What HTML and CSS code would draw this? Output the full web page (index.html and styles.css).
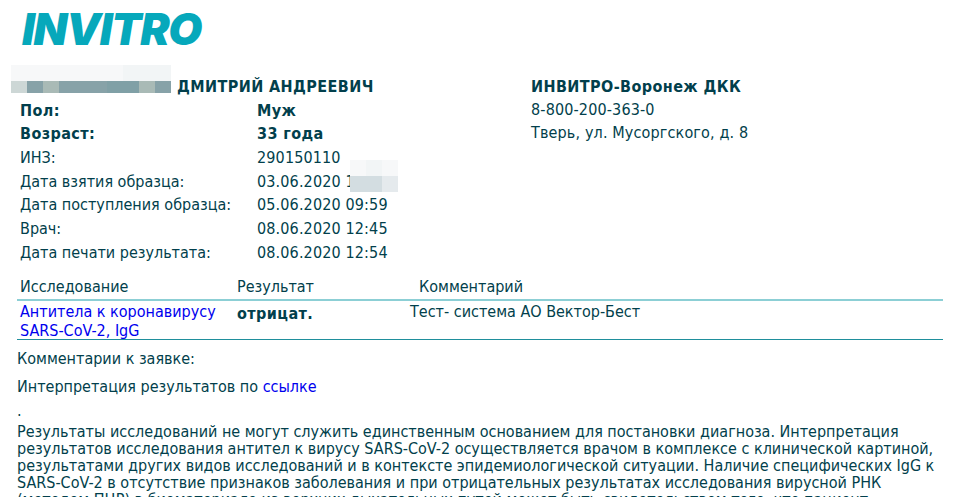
FILE: index.html
```html
<!DOCTYPE html>
<html lang="ru">
<head>
<meta charset="utf-8">
<title>INVITRO</title>
<link rel="stylesheet" href="styles.css">
</head>
<body>
<header class="logo-row"><span class="logo">INVITRO</span></header>
<section class="info">
  <div class="patient">
    <div class="name"><span class="name-text">ДМИТРИЙ АНДРЕЕВИЧ</span></div>
    <dl class="fields">
      <dt class="strong">Пол:</dt><dd class="strong">Муж</dd>
      <dt class="strong">Возраст:</dt><dd class="strong">33 года</dd>
      <dt>ИНЗ:</dt><dd>290150110</dd>
      <dt>Дата взятия образца:</dt><dd>03.06.2020 1</dd>
      <dt>Дата поступления образца:</dt><dd>05.06.2020 09:59</dd>
      <dt>Врач:</dt><dd>08.06.2020 12:45</dd>
      <dt>Дата печати результата:</dt><dd>08.06.2020 12:54</dd>
    </dl>
  </div>
  <div class="lab">
    <div class="lab-name">ИНВИТРО-Воронеж ДКК</div>
    <div class="lab-line">8-800-200-363-0</div>
    <div class="lab-line">Тверь, ул. Мусоргского, д. 8</div>
  </div>
</section>
<section class="results">
  <div class="results-head">
    <span class="col-test">Исследование</span>
    <span class="col-result">Результат</span>
    <span class="col-comment">Комментарий</span>
  </div>
  <div class="results-row">
    <a class="col-test link" href="#">Антитела к коронавирусу SARS-CoV-2, IgG</a>
    <span class="col-result strong">отрицат.</span>
    <span class="col-note">Тест- система АО Вектор-Бест</span>
  </div>
</section>
<section class="notes">
  <p class="note-title">Комментарии к заявке:</p>
  <p class="note-link">Интерпретация результатов по <a class="link" href="#">ссылке</a></p>
  <p class="note-dot">.</p>
  <p class="note-body">Результаты исследований не могут служить единственным основанием для постановки диагноза. Интерпретация<br>результатов исследования антител к вирусу SARS-CoV-2 осуществляется врачом в комплексе с клинической картиной,<br>результатами других видов исследований и в контексте эпидемиологической ситуации. Наличие специфических IgG к<br>SARS-CoV-2 в отсутствие признаков заболевания и при отрицательных результатах исследования вирусной РНК<br>(методом ПЦР) в биоматериале из верхних дыхательных путей может быть свидетельством того, что пациент</p>
</section>
<div class="mosaic mosaic-name">
  <i class="t a"></i><i class="t a"></i><i class="t a"></i><i class="t a"></i><i class="t a"></i><i class="t a"></i><i class="t a"></i><i class="t b"></i><i class="t b"></i><i class="t b"></i>
  <i class="t c short"></i><i class="t d short"></i><i class="t e short"></i><i class="t d short"></i><i class="t d short"></i><i class="t d short"></i><i class="t f short"></i><i class="t f short"></i><i class="t e short"></i><i class="t d short"></i>
</div>
<div class="mosaic mosaic-date">
  <i class="t a"></i><i class="t b"></i><i class="t a"></i>
  <i class="t g"></i><i class="t g"></i><i class="t h"></i>
</div>
</body>
</html>
```
FILE: styles.css
```css
html, body {
  margin: 0;
  height: 497px;
  overflow: hidden;
  background: #fff;
}
body {
  position: relative;
  font-family: "DejaVu Sans Condensed", "DejaVu Sans", sans-serif;
  font-stretch: condensed;
  font-size: 16px;
  color: #023f4c;
}
.logo-row {
  height: 68px;
  padding-left: 22px;
  box-sizing: border-box;
}
.logo {
  display: block;
  font-family: "Inter", sans-serif;
  font-weight: 900;
  font-style: italic;
  font-size: 44px;
  line-height: 58px;
  letter-spacing: -1.3px;
  color: #06a8bb;
}
.info {
  display: flex;
  padding-left: 20px;
}
.patient { width: 511px; }
.name {
  height: 30.5px;
  line-height: 38px;
  padding-left: 157px;
}
.name-text, .strong, .lab-name {
  font-weight: 700;
  letter-spacing: 0.42px;
}
.fields {
  display: grid;
  grid-template-columns: 237px 1fr;
  grid-auto-rows: 23.7px;
  line-height: 23.7px;
  margin: 0;
}
.fields dd { margin: 0; letter-spacing: 0.14px; }
.fields dd.strong { letter-spacing: 0.42px; }
.lab { line-height: 23.2px; padding-top: 7px; }
.lab-line { letter-spacing: 0.14px; }
.results { margin: 9.5px 16px 0 17px; }
.results-head {
  display: flex;
  height: 25px;
  line-height: 26px;
  border-bottom: 2px solid #8ccfd5;
  padding-left: 3px;
}
.results-row {
  display: flex;
  height: 37px;
  padding-left: 3px;
  line-height: 19px;
  padding-top: 1px;
  border-bottom: 1px solid #1f8f9c;
}
.col-test { width: 217px; flex: none; }
.col-result { width: 182px; flex: none; }
.col-comment { flex: none; }
.col-note { margin-left: -9px; }
.results-row .strong { padding-top: 2px; }
.link { color: #0000ee; text-decoration: none; }
.notes { padding-left: 17px; }
.notes p { margin: 0; }
.note-title { line-height: 18px; padding-top: 10px; }
.note-link { line-height: 18px; padding-top: 10px; }
.note-dot { line-height: 18px; padding-top: 6px; }
.note-body { line-height: 17px; padding-top: 3px; white-space: nowrap; }
.mosaic {
  position: absolute;
  display: grid;
  grid-auto-rows: 16px;
}
.mosaic-name {
  left: 11px;
  top: 65px;
  grid-template-columns: repeat(10, 16px);
}
.mosaic-date {
  left: 350px;
  top: 160px;
  grid-template-columns: repeat(3, 16px);
}
.t { display: block; height: 16px; }
.short { height: 12px; }
.a { background: #f7f8f9; }
.b { background: #f2f5f6; }
.c { background: #cdd7d6; }
.d { background: #87a2a8; }
.e { background: #a9bab6; }
.f { background: #80a0a6; }
.g { background: #d3dde1; }
.h { background: #e5eaed; }
```
